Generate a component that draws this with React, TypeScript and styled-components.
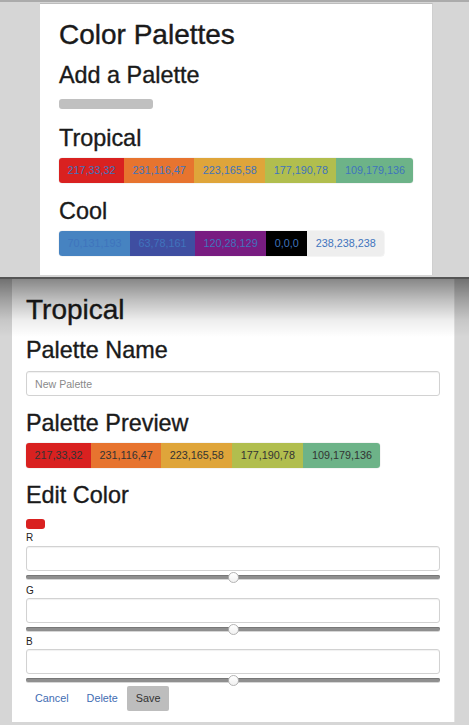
import React from "react";
import styled, { createGlobalStyle } from "styled-components";

const Global = createGlobalStyle`
  html, body { margin: 0; padding: 0; background: #d6d6d6; }
  body { font-family: "Liberation Sans", Arial, Helvetica, sans-serif; color: #222; }
  * { box-sizing: border-box; }
`;

type Rgb = [number, number, number];

const tropical: Rgb[] = [
  [217, 33, 32],
  [231, 116, 47],
  [223, 165, 58],
  [177, 190, 78],
  [109, 179, 136],
];
const cool: Rgb[] = [
  [70, 131, 193],
  [63, 78, 161],
  [120, 28, 129],
  [0, 0, 0],
  [238, 238, 238],
];

const Page = styled.div`
  width: 469px;
  min-height: 725px;
  background: #d6d6d6;
`;

const TopSection = styled.section`
  border-top: 2px solid #ababab;
  border-bottom: 2px solid #555;
  padding: 1px 0 2px;
`;

const ListCard = styled.div`
  margin-left: 40px;
  width: 393px;
  background: #fff;
  border-top: 1px solid #bdbdbd;
  border-right: 1px solid #cfcfcf;
  padding: 15px 19px 19px;
`;

const EditSection = styled.section`
  position: relative;
  padding: 0 14px 3px 12px;
`;

const Shade = styled.div`
  position: absolute;
  top: 0;
  left: 0;
  right: 0;
  height: 60px;
  pointer-events: none;
  background: linear-gradient(
    to bottom,
    rgba(0, 0, 0, 0.47) 0px,
    rgba(0, 0, 0, 0.25) 21px,
    rgba(0, 0, 0, 0.07) 41px,
    rgba(0, 0, 0, 0) 58px
  );
`;

const EditCard = styled.div`
  width: 443px;
  background: #fff;
  padding: 15px 14px 11px;
  border-right: 1px solid #e4e4e4;
`;

const Title = styled.h1`
  margin: 0;
  font-size: 28px;
  line-height: 31px;
  font-weight: 400;
  color: #1a1a1a;
  -webkit-text-stroke: 0.4px #1a1a1a;
`;

const Heading = styled.h2<{ $mt: number }>`
  margin: ${(p) => p.$mt}px 0 0;
  font-size: 23.4px;
  line-height: 26px;
  font-weight: 400;
  color: #1a1a1a;
  -webkit-text-stroke: 0.35px #1a1a1a;
`;

const AddBar = styled.div`
  margin-top: 11px;
  width: 94px;
  height: 10px;
  border-radius: 3px;
  background: #c0c0c0;
`;

const Strip = styled.div`
  margin-top: 7px;
  display: inline-flex;
  height: 25px;
  border-radius: 3px;
  overflow: hidden;
  box-shadow: 0 0 0 0.5px rgba(0, 0, 0, 0.08);
`;

const StripRow = styled.div`
  display: flex;
`;

const Swatch = styled.span<{ $text: string }>`
  display: block;
  height: 25px;
  line-height: 25px;
  padding: 0 8.5px;
  font-size: 10.8px;
  color: ${(p) => p.$text};
  white-space: nowrap;
`;

const NameInput = styled.input`
  display: block;
  width: 100%;
  height: 25px;
  margin-top: 8px;
  padding: 0 8px;
  border: 1px solid #d2d2d2;
  border-radius: 3px;
  box-shadow: inset 0 1px 1px rgba(0, 0, 0, 0.06);
  font-family: inherit;
  font-size: 10.6px;
  color: #555;
  outline: none;
  &::placeholder { color: #8a8a8a; }
`;

const ValueInput = styled(NameInput)<{ $mt: number }>`
  margin-top: ${(p) => p.$mt}px;
`;

const CurrentColor = styled.div`
  margin-top: 11px;
  width: 19px;
  height: 10px;
  border-radius: 3px;
`;

const ChannelLabel = styled.label<{ $mt: number }>`
  display: block;
  margin-top: ${(p) => p.$mt}px;
  font-size: 10px;
  line-height: 12px;
  color: #222;
`;

const Slider = styled.div`
  position: relative;
  height: 12px;
  display: flex;
  align-items: center;
`;

const Track = styled.div`
  width: 100%;
  height: 3.5px;
  border-radius: 2px;
  background: #8f8f8f;
  box-shadow: inset 0 1px 0 #777, 0 1px 0 #d6d6d6;
`;

const Thumb = styled.div`
  position: absolute;
  top: 0.5px;
  width: 11px;
  height: 11px;
  margin-left: -5.5px;
  border-radius: 50%;
  background: linear-gradient(#fff, #f1f1f1);
  border: 1px solid #b4b4b4;
`;

const Actions = styled.div`
  display: flex;
`;

const ActionButton = styled.button<{ $primary?: boolean }>`
  height: 25px;
  line-height: 25px;
  padding: 0 9px;
  border: none;
  border-radius: 2px;
  font-family: inherit;
  font-size: 10.8px;
  background: ${(p) => (p.$primary ? "#bdbdbd" : "transparent")};
  color: ${(p) => (p.$primary ? "#333" : "#3f6db3")};
  cursor: pointer;
`;

const rgb = (c: Rgb) => `rgb(${c[0]},${c[1]},${c[2]})`;

function Palette({ colors, text }: { colors: Rgb[]; text: string }) {
  return (
    <Strip>
      <StripRow>
        {colors.map((c, i) => (
          <Swatch key={i} $text={text} style={{ background: rgb(c) }}>
            {c.join(",")}
          </Swatch>
        ))}
      </StripRow>
    </Strip>
  );
}

function ChannelSlider({ value }: { value: number }) {
  return (
    <Slider>
      <Track />
      <Thumb style={{ left: `${(value / 255) * 100}%` }} />
    </Slider>
  );
}

export default function App() {
  const channels: { name: string; labelMt: number; inputMt: number }[] = [
    { name: "R", labelMt: 3, inputMt: 2 },
    { name: "G", labelMt: 2, inputMt: 1 },
    { name: "B", labelMt: 1, inputMt: 1 },
  ];
  return (
    <Page>
      <Global />
      <TopSection>
        <ListCard>
          <Title>Color Palettes</Title>
          <Heading $mt={12}>Add a Palette</Heading>
          <AddBar />
          <Heading $mt={16}>Tropical</Heading>
          <Palette colors={tropical} text="#3f74bd" />
          <Heading $mt={15}>Cool</Heading>
          <Palette colors={cool} text="#3f74bd" />
        </ListCard>
      </TopSection>
      <EditSection>
        <EditCard>
          <Title>Tropical</Title>
          <Heading $mt={12}>Palette Name</Heading>
          <NameInput placeholder="New Palette" />
          <Heading $mt={14}>Palette Preview</Heading>
          <Palette colors={tropical} text="#333" />
          <Heading $mt={14}>Edit Color</Heading>
          <CurrentColor style={{ background: rgb(tropical[0]) }} />
          {channels.map((ch) => (
            <div key={ch.name}>
              <ChannelLabel $mt={ch.labelMt}>{ch.name}</ChannelLabel>
              <ValueInput $mt={ch.inputMt} />
              <ChannelSlider value={127.5} />
            </div>
          ))}
          <Actions>
            <ActionButton>Cancel</ActionButton>
            <ActionButton>Delete</ActionButton>
            <ActionButton $primary>Save</ActionButton>
          </Actions>
        </EditCard>
        <Shade />
      </EditSection>
    </Page>
  );
}
